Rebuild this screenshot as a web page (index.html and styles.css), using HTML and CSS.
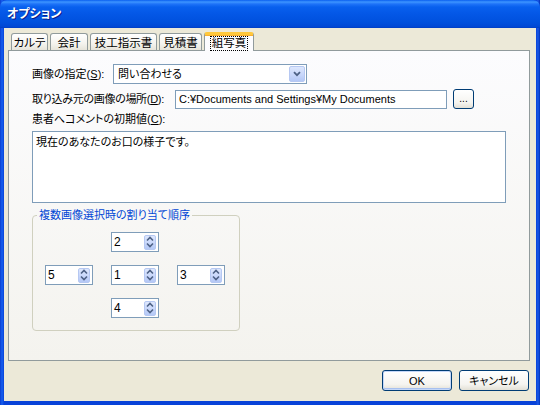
FILE: index.html
```html
<!DOCTYPE html>
<html lang="ja">
<head>
<meta charset="utf-8">
<title>オプション</title>
<link rel="stylesheet" href="styles.css">
</head>
<body>
<div class="window">
  <div class="titlebar"><span class="title">オプション</span></div>
  <div class="client">
    <div class="tabs">
      <div class="tab tab-karte">カルテ</div>
      <div class="tab tab-kaikei">会計</div>
      <div class="tab tab-shiji">技工指示書</div>
      <div class="tab tab-mitsumori">見積書</div>
      <div class="tab tab-active tab-photo"><span class="focus">組写真</span></div>
    </div>
    <div class="panel">
      <div class="row row-image">
        <label class="lbl lbl-image">画像の指定(<u>S</u>):</label>
        <div class="combo">
          <span class="combo-text">問い合わせる</span>
          <span class="combo-btn"><svg width="8" height="6" viewBox="0 0 8 6"><path d="M1 1.2l3 3 3-3" fill="none" stroke="#4d6185" stroke-width="1.8"/></svg></span>
        </div>
      </div>
      <div class="row row-path">
        <label class="lbl lbl-path">取り込み元の画像の場所(<u>D</u>):</label>
        <div class="textbox path">C:¥Documents and Settings¥My Documents</div>
        <button class="xpbtn browse">...</button>
      </div>
      <div class="lbl lbl-comment">患者へコメントの初期値(<u>C</u>):</div>
      <div class="textarea">現在のあなたのお口の様子です。</div>
      <fieldset class="group">
        <legend>複数画像選択時の割り当て順序</legend>
        <div class="spin-grid">
          <div class="spin cell-top"><span class="spin-val">2</span><span class="updown"><svg width="8" height="12" viewBox="0 0 8 12"><path d="M1 4.5l3-3 3 3M1 7.5l3 3 3-3" fill="none" stroke="#4d6185" stroke-width="1.6"/></svg></span></div>
          <div class="spin cell-left"><span class="spin-val">5</span><span class="updown"><svg width="8" height="12" viewBox="0 0 8 12"><path d="M1 4.5l3-3 3 3M1 7.5l3 3 3-3" fill="none" stroke="#4d6185" stroke-width="1.6"/></svg></span></div>
          <div class="spin cell-center"><span class="spin-val">1</span><span class="updown"><svg width="8" height="12" viewBox="0 0 8 12"><path d="M1 4.5l3-3 3 3M1 7.5l3 3 3-3" fill="none" stroke="#4d6185" stroke-width="1.6"/></svg></span></div>
          <div class="spin cell-right"><span class="spin-val">3</span><span class="updown"><svg width="8" height="12" viewBox="0 0 8 12"><path d="M1 4.5l3-3 3 3M1 7.5l3 3 3-3" fill="none" stroke="#4d6185" stroke-width="1.6"/></svg></span></div>
          <div class="spin cell-bottom"><span class="spin-val">4</span><span class="updown"><svg width="8" height="12" viewBox="0 0 8 12"><path d="M1 4.5l3-3 3 3M1 7.5l3 3 3-3" fill="none" stroke="#4d6185" stroke-width="1.6"/></svg></span></div>
        </div>
      </fieldset>
    </div>
    <div class="footer">
      <button class="xpbtn dlg default">OK</button>
      <button class="xpbtn dlg">キャンセル</button>
    </div>
  </div>
</div>
</body>
</html>
```

FILE: styles.css
```css
* { box-sizing: border-box; }

html, body {
  margin: 0;
  padding: 0;
  background: #0831d9;
}

body {
  font-family: "Liberation Sans", "Noto Sans CJK JP", sans-serif;
  font-size: 11px;
  line-height: 14px;
  font-feature-settings: "palt";
  color: #000;
}

/* window frame */
.window {
  width: 540px;
  height: 405px;
  display: flex;
  flex-direction: column;
  background: linear-gradient(90deg, #0a3ccf 0, #1660f0 2px, #0842d8 4px, #0842d8 536px, #1a5ae8 538px, #0030b8 540px);
}

.titlebar {
  height: 28px;
  flex: none;
  display: flex;
  align-items: center;
  padding-left: 7px;
  background: linear-gradient(#0a5ff0 0, #3d95ff 2px, #1e73f8 4px, #0860ee 7px, #0457e6 50%, #0050dd 80%, #0047d4 96%, #003cc0 100%);
  border-radius: 7px 7px 0 0;
}

.title {
  color: #fff;
  font-weight: bold;
  font-size: 12px;
  text-shadow: 1px 1px 0 #0a1e8a;
}

.client {
  flex: 1;
  margin: 0 4px 4px;
  background: #ece9d8;
  padding: 4px 6px 10px 4px;
  display: flex;
  flex-direction: column;
}

/* tab strip */
.tabs {
  display: flex;
  align-items: flex-end;
  gap: 2px;
  height: 19px;
  padding-left: 3px;
  margin-bottom: -1px;
  position: relative;
  z-index: 1;
  flex: none;
}

.tab {
  height: 17px;
  margin-bottom: 1px;
  border: 1px solid #919b9c;
  border-bottom: none;
  border-radius: 3px 3px 0 0;
  background: linear-gradient(#ffffff, #f4f3ee 60%, #e6e4da);
  display: flex;
  align-items: center;
  justify-content: center;
  padding-top: 1px;
  font-size: 11.5px;
}

.tab-karte { width: 37px; }
.tab-kaikei { width: 38px; }
.tab-shiji { width: 67px; }
.tab-mitsumori { width: 43px; }
.tab-photo { width: 50px; }

.tab-active {
  height: 19px;
  margin-bottom: 0;
  background: #fcfcfe;
  border-top: 3px solid #ffc83c;
  box-shadow: inset 0 1px 0 #f8b030;
  padding-top: 0;
}

.focus {
  outline: 1px dotted #000;
  padding: 0 1px;
  line-height: 13px;
}

/* tab page */
.panel {
  flex: 1;
  border: 1px solid #919b9c;
  background: linear-gradient(#fcfcfe, #f4f3ee);
  padding: 13px 0 0 23px;
  display: flex;
  flex-direction: column;
  align-items: flex-start;
}

.row {
  display: flex;
  align-items: center;
}

.row-image { height: 20px; }
.row-path { height: 20px; margin-top: 5px; }

.lbl { white-space: nowrap; }
.lbl-image { width: 81px; }
.lbl-path { width: 143px; letter-spacing: -0.3px; }
.lbl-comment { margin-top: 3px; height: 14px; }

.combo {
  width: 194px;
  height: 20px;
  border: 1px solid #7f9db9;
  background: #fff;
  display: flex;
  align-items: center;
  padding: 1px;
}

.combo-text {
  flex: 1;
  padding-left: 3px;
}

.combo-btn {
  width: 16px;
  height: 16px;
  border: 1px solid #b6c8f2;
  border-radius: 2px;
  background: linear-gradient(#dde7fd, #c6d5fa 60%, #b4c8f6);
  display: flex;
  align-items: center;
  justify-content: center;
}

.textbox {
  border: 1px solid #7f9db9;
  background: #fff;
  height: 19px;
  display: flex;
  align-items: center;
  padding-left: 3px;
  white-space: nowrap;
}

.path { width: 272px; }

.xpbtn {
  font: inherit;
  border: 1px solid #003c74;
  border-radius: 3px;
  background: linear-gradient(#ffffff, #f5f4f0 70%, #e3e0d6);
  padding: 0;
  color: #000;
}

.browse {
  width: 21px;
  height: 20px;
  margin-left: 6px;
  font-size: 10px;
  line-height: 10px;
}

.textarea {
  margin-top: 5px;
  width: 474px;
  height: 72px;
  border: 1px solid #7f9db9;
  background: #fff;
  padding: 3px 3px;
  flex: none;
}

/* grouped spin controls */
.group {
  margin: 5px 0 0;
  width: 208px;
  height: 123px;
  border: 1px solid #d0d0bf;
  border-radius: 4px;
  padding: 0;
  min-width: 0;
}

.group legend {
  color: #0046d5;
  margin-left: 4px;
  padding: 0 2px;
  line-height: 14px;
}

.spin-grid {
  display: grid;
  grid-template-columns: repeat(3, 48px);
  grid-template-rows: repeat(3, 20px);
  column-gap: 18px;
  row-gap: 13px;
  margin: 10px 0 0 12px;
}

.cell-top { grid-column: 2; grid-row: 1; }
.cell-left { grid-column: 1; grid-row: 2; }
.cell-center { grid-column: 2; grid-row: 2; }
.cell-right { grid-column: 3; grid-row: 2; }
.cell-bottom { grid-column: 2; grid-row: 3; }

.spin {
  border: 1px solid #7f9db9;
  background: #fff;
  display: flex;
  align-items: center;
  padding: 1px 2px 1px 2px;
  font-size: 12px;
}

.spin-val { flex: 1; }

.updown {
  width: 12px;
  height: 15px;
  border: 1px solid #b6c8f2;
  border-radius: 2px;
  background: linear-gradient(#dde7fd, #c6d5fa 60%, #b4c8f6);
  display: flex;
  align-items: center;
  justify-content: center;
}

/* dialog buttons */
.footer {
  flex: none;
  display: flex;
  justify-content: flex-end;
  gap: 7px;
  margin-top: 9px;
  margin-right: 1px;
}

.dlg {
  width: 70px;
  height: 21px;
  font-size: 11px;
}

.default {
  box-shadow: inset 0 0 0 1px #c4d7f8, inset 0 -1px 0 1px #a7c0ef;
}
```
